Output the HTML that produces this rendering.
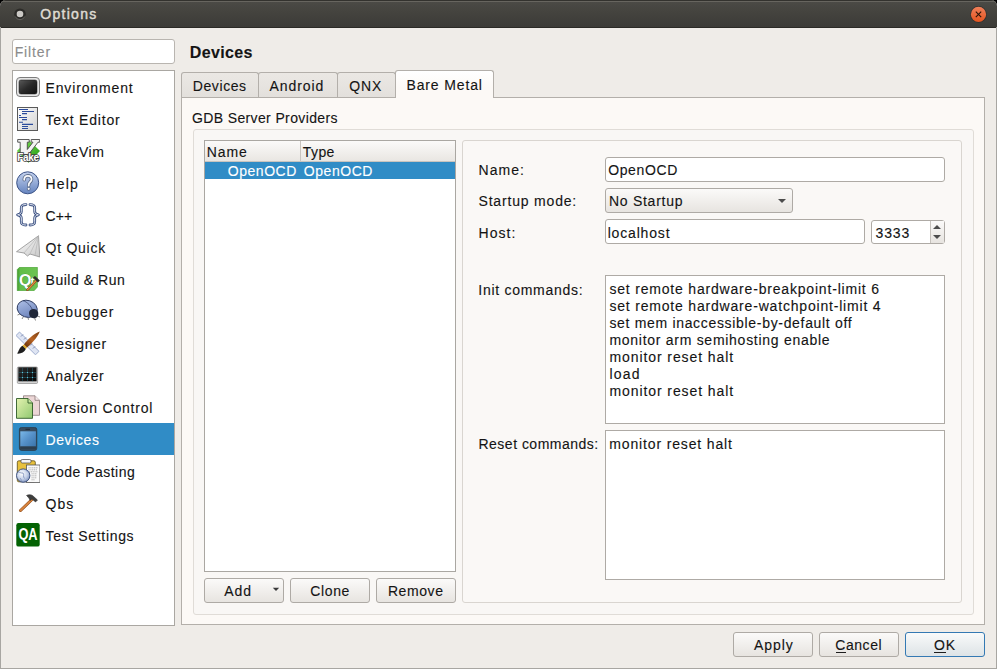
<!DOCTYPE html><html><head><meta charset="utf-8"><style>
*{box-sizing:border-box}
html,body{margin:0;padding:0;width:997px;height:669px;overflow:hidden;background:#000}
.t{position:absolute;white-space:pre;font-family:"Liberation Sans",sans-serif;-webkit-text-stroke:0.12px currentColor}
.a{position:absolute}
</style></head><body>
<div class="a" style="left:0;top:0;width:997px;height:669px;background:#efece8;border-radius:6px 6px 0 0;overflow:hidden"><div class="a" style="left:0;top:0;width:997px;height:28px;background:linear-gradient(#4c4b47,#45443f 40%,#3c3b37);border-bottom:1px solid #2b2a26"></div><div class="a" style="left:0;top:0;width:997px;height:1px;background:#33322e"></div><div class="a" style="left:0;top:1px;width:997px;height:1px;background:#67655f"></div><svg class="a" style="left:12px;top:6px" width="16" height="16"><circle cx="8" cy="8.2" r="5.8" fill="#2c2b28"/><path d="M3.2 10.5A5.2 5.2 0 0 0 12.8 10.5" stroke="#6b6a65" stroke-width="0.9" fill="none"/><circle cx="8" cy="8" r="3.3" fill="#cbc9c5"/></svg><div class="t" style="left:40.2px;top:6px;font-size:14px;line-height:16px;font-weight:normal;color:#dfdbd2;letter-spacing:1.3px;-webkit-text-stroke:0.45px #dfdbd2">Options</div>
<svg class="a" style="left:968px;top:4px" width="22" height="22"><defs><linearGradient id="cb" x1="0" y1="0" x2="0" y2="1"><stop offset="0" stop-color="#f0805a"/><stop offset="1" stop-color="#e5541f"/></linearGradient></defs><circle cx="10.5" cy="10.4" r="8.3" fill="#2b2a27" opacity="0.7"/><circle cx="10.5" cy="10.4" r="7.6" fill="url(#cb)"/><path d="M7.8 7.7L13.2 13.1M13.2 7.7L7.8 13.1" stroke="#2a1408" stroke-width="1.1"/></svg><div class="a" style="left:0;top:27px;width:1px;height:642px;background:#a8a6a2"></div><div class="a" style="left:996px;top:27px;width:1px;height:642px;background:#a8a6a2"></div><div class="a" style="left:0;top:668px;width:997px;height:1px;background:#a8a6a2"></div><div class="a" style="left:12px;top:39px;width:163px;height:25px;background:#fff;border:1px solid #b9b5b0;border-radius:3px"></div><div class="t" style="left:14.7px;top:44px;font-size:14px;line-height:16px;font-weight:normal;color:#8c8c8c;letter-spacing:0.86px;">Filter</div>
<div class="a" style="left:12px;top:70px;width:163px;height:556px;background:#fff;border:1px solid #aaa7a2"></div><div class="a" style="left:13px;top:423px;width:161px;height:32px;background:#308cc6"></div><div class="t" style="left:45.5px;top:80px;font-size:14px;line-height:16px;font-weight:normal;color:#141414;letter-spacing:0.86px;">Environment</div>
<svg class="a" style="left:16px;top:75px" width="24" height="24" viewBox="0 0 24 24"><defs><linearGradient id="g0" x1="0" y1="0" x2="1" y2="1"><stop offset="0" stop-color="#5a5a5a"/><stop offset="0.5" stop-color="#2a2a2a"/><stop offset="1" stop-color="#111"/></linearGradient></defs>
<rect x="0.5" y="2.5" width="23" height="19" rx="3.5" fill="#e6e6e6" stroke="#7c7c7c"/>
<rect x="3" y="5" width="18" height="14" rx="2" fill="url(#g0)" stroke="#1a1a1a" stroke-width="0.5"/></svg><div class="t" style="left:45.5px;top:112px;font-size:14px;line-height:16px;font-weight:normal;color:#141414;letter-spacing:0.8px;">Text Editor</div>
<svg class="a" style="left:16px;top:107px" width="24" height="24" viewBox="0 0 24 24"><defs><linearGradient id="g1" x1="0" y1="0" x2="1" y2="1"><stop offset="0" stop-color="#ffffff"/><stop offset="1" stop-color="#d2d2d2"/></linearGradient></defs>
<rect x="1.5" y="0.5" width="20" height="23" fill="url(#g1)" stroke="#5a5a5a"/>
<g stroke="#2c4c9c" stroke-width="1.1">
<path d="M3 2.5H12M6 4.5H18M6 6.6H11M3 8.5H5M3 10.5H11M6 12.6H11M3 15.2H7M6 17.4H17M6 19.5H12M6 21.5H12"/></g></svg><div class="t" style="left:45.5px;top:144px;font-size:14px;line-height:16px;font-weight:normal;color:#141414;letter-spacing:0.567px;">FakeVim</div>
<svg class="a" style="left:16px;top:139px" width="24" height="24" viewBox="0 0 24 24"><defs><linearGradient id="g2" x1="0" y1="0" x2="1" y2="1"><stop offset="0" stop-color="#86e85a"/><stop offset="1" stop-color="#1c9410"/></linearGradient></defs>
<path d="M12.5 0.8L24 12L12.5 23.8L0.8 12Z" fill="url(#g2)"/>
<path d="M1.7 0.5H13.2V3.2H11.3V10.5L17 3.2H15.2V0.5H23.7V3.2H22L12.5 15.5H4.2V3.2H1.7Z" fill="#f2f2f2" stroke="#4a4a4a" stroke-width="0.9" stroke-linejoin="miter"/>
<text x="12" y="21.6" text-anchor="middle" font-family="Liberation Sans" font-size="10" font-weight="bold" fill="#fff" stroke="#404040" stroke-width="1.7" paint-order="stroke" letter-spacing="-0.3">Fake</text></svg><div class="t" style="left:45.5px;top:176px;font-size:14px;line-height:16px;font-weight:normal;color:#141414;letter-spacing:1.167px;">Help</div>
<svg class="a" style="left:16px;top:171px" width="24" height="24" viewBox="0 0 24 24"><defs><linearGradient id="g3" x1="0" y1="0" x2="0" y2="1"><stop offset="0" stop-color="#c4d2ee"/><stop offset="1" stop-color="#6584bf"/></linearGradient></defs>
<circle cx="11.7" cy="11.8" r="11" fill="url(#g3)" stroke="#3d5487" stroke-width="1"/>
<path d="M8.2 8.8C8.2 6.2 10 4.8 11.9 4.8C14 4.8 15.6 6.2 15.6 8.3C15.6 10.8 12.7 11.2 12.7 13.8V14.6" fill="none" stroke="#5a6a88" stroke-width="3.4" stroke-linecap="round"/>
<path d="M8.2 8.8C8.2 6.2 10 4.8 11.9 4.8C14 4.8 15.6 6.2 15.6 8.3C15.6 10.8 12.7 11.2 12.7 13.8V14.6" fill="none" stroke="#fafbfd" stroke-width="1.8" stroke-linecap="round"/>
<circle cx="12.7" cy="17.8" r="1.9" fill="#5a6a88"/><circle cx="12.7" cy="17.8" r="1.1" fill="#fff"/></svg><div class="t" style="left:45.5px;top:208px;font-size:14px;line-height:16px;font-weight:normal;color:#141414;letter-spacing:0.15px;">C++</div>
<svg class="a" style="left:16px;top:203px" width="24" height="24" viewBox="0 0 24 24"><g fill="none" stroke-linecap="round" stroke-linejoin="round">
<path id="lb" d="M10 1.6C6.5 1.6 5.3 2.3 5.3 5V8.6C5.3 10.4 4 11.4 1.6 11.8C4 12.2 5.3 13.2 5.3 15V18.6C5.3 21.3 6.5 22 10 22" stroke="#3a4f80" stroke-width="2.8"/>
<path d="M10 1.6C6.5 1.6 5.3 2.3 5.3 5V8.6C5.3 10.4 4 11.4 1.6 11.8C4 12.2 5.3 13.2 5.3 15V18.6C5.3 21.3 6.5 22 10 22" stroke="#e4e9f4" stroke-width="1"/>
<path d="M14 1.6C17.5 1.6 18.7 2.3 18.7 5V8.6C18.7 10.4 20 11.4 22.4 11.8C20 12.2 18.7 13.2 18.7 15V18.6C18.7 21.3 17.5 22 14 22" stroke="#3a4f80" stroke-width="2.8"/>
<path d="M14 1.6C17.5 1.6 18.7 2.3 18.7 5V8.6C18.7 10.4 20 11.4 22.4 11.8C20 12.2 18.7 13.2 18.7 15V18.6C18.7 21.3 17.5 22 14 22" stroke="#e4e9f4" stroke-width="1"/></g></svg><div class="t" style="left:45.5px;top:240px;font-size:14px;line-height:16px;font-weight:normal;color:#141414;letter-spacing:0.75px;">Qt Quick</div>
<svg class="a" style="left:16px;top:235px" width="24" height="24" viewBox="0 0 24 24"><defs><linearGradient id="g5" x1="0" y1="0" x2="1" y2="1"><stop offset="0" stop-color="#ffffff"/><stop offset="1" stop-color="#c8c8c8"/></linearGradient></defs>
<path d="M22.5 0.8L0.5 16.7L8 18L11.5 21L14 19L23.8 22Z" fill="url(#g5)" stroke="#8e8e8e" stroke-width="0.8" stroke-linejoin="round"/>
<path d="M22.5 0.8L8 18M22.5 0.8L14 19M22.5 0.8L19 20.5" stroke="#b0b0b0" stroke-width="0.6" fill="none"/></svg><div class="t" style="left:45.5px;top:272px;font-size:14px;line-height:16px;font-weight:normal;color:#141414;letter-spacing:0.54px;">Build &amp; Run</div>
<svg class="a" style="left:16px;top:267px" width="24" height="24" viewBox="0 0 24 24"><defs><linearGradient id="g6" x1="0" y1="0" x2="1" y2="0"><stop offset="0" stop-color="#3f9a2c"/><stop offset="0.15" stop-color="#62bd48"/><stop offset="1" stop-color="#6cc452"/></linearGradient></defs>
<path d="M3.5 0.3H21.4V20L18 23.8H1.3V2.5Z" fill="url(#g6)" stroke="#3f9a2c" stroke-width="0.6"/>
<text x="3" y="18.5" font-family="Liberation Sans" font-weight="bold" font-size="16" fill="#fff" stroke="#2e7a22" stroke-width="0.6" paint-order="stroke">Q</text>
<text x="14.5" y="17.5" font-family="Liberation Sans" font-weight="bold" font-size="11" fill="#fff" stroke="#2e7a22" stroke-width="0.5" paint-order="stroke">t</text>
<path d="M11.5 22.8L20 13.8" stroke="#7a3e12" stroke-width="2.4" stroke-linecap="round"/>
<path d="M11.5 22.8L20 13.8" stroke="#e08a40" stroke-width="1.3" stroke-linecap="round"/>
<path d="M17 10.5L19 9L23.8 13.5L22 15.5Z" fill="#2e2e2e"/></svg><div class="t" style="left:45.5px;top:304px;font-size:14px;line-height:16px;font-weight:normal;color:#141414;letter-spacing:0.929px;">Debugger</div>
<svg class="a" style="left:16px;top:299px" width="24" height="24" viewBox="0 0 24 24"><defs><linearGradient id="g7" x1="0" y1="0" x2="1" y2="1"><stop offset="0" stop-color="#b4c5ea"/><stop offset="1" stop-color="#6078b4"/></linearGradient></defs>
<path d="M4 15L1.5 16M7.5 17.5L6 20M12 18.5L12.5 20.8M20.5 16.5L24 18M18.5 18.5L19.5 21.5" stroke="#666" stroke-width="0.8" fill="none"/>
<ellipse cx="11.2" cy="9.8" rx="10.2" ry="8.4" transform="rotate(18 11.2 9.8)" fill="url(#g7)" stroke="#2c3a60" stroke-width="0.9"/>
<path d="M7 1.6C11.5 3 15 7 17 12" stroke="#2c3a60" stroke-width="0.7" fill="none"/>
<path d="M13 14C13 11 15.5 9.8 18 10C21 10.3 22.5 12.5 22.3 15.3C22 18 20 19.5 17.5 19.3C14.8 19 13 17 13 14Z" fill="#1f2738"/></svg><div class="t" style="left:45.5px;top:336px;font-size:14px;line-height:16px;font-weight:normal;color:#141414;letter-spacing:0.671px;">Designer</div>
<svg class="a" style="left:16px;top:331px" width="24" height="24" viewBox="0 0 24 24"><defs><linearGradient id="g8" x1="0" y1="1" x2="1" y2="0"><stop offset="0" stop-color="#5a2a08"/><stop offset="0.5" stop-color="#b86424"/><stop offset="1" stop-color="#7a3e10"/></linearGradient></defs>
<path d="M3.5 1L0 4.5L19.5 23.8L23 20.3Z" fill="#dfe5f3" stroke="#8c9cc4" stroke-width="0.8"/>
<path d="M5 5.5L7 3.5M8 8.5L10 6.5M11 11.5L13 9.5M14 14.5L16 12.5M17 17.5L19 15.5" stroke="#7080a8" stroke-width="0.9"/>
<path d="M23.8 0.5C17.5 2.5 11.5 8.5 8 13.5L11 16.5C15.5 12.5 21.5 6.5 23.8 0.5Z" fill="url(#g8)"/>
<path d="M8 13.5L11 16.5L9.8 18L6.5 14.8Z" fill="#e0a820"/>
<path d="M6.5 14.8L9.8 18C8.5 21.5 4.5 23 1 22.6C2.8 21 3 16.5 6.5 14.8Z" fill="#1e1e1e"/></svg><div class="t" style="left:45.5px;top:368px;font-size:14px;line-height:16px;font-weight:normal;color:#141414;letter-spacing:0.529px;">Analyzer</div>
<svg class="a" style="left:16px;top:363px" width="24" height="24" viewBox="0 0 24 24"><defs><linearGradient id="g9" x1="0" y1="0" x2="1" y2="1"><stop offset="0" stop-color="#2a2a2a"/><stop offset="1" stop-color="#050505"/></linearGradient></defs>
<rect x="1.3" y="4" width="20.3" height="16.5" rx="1.2" fill="#d4d4d4" stroke="#7a7a7a" stroke-width="0.6"/>
<rect x="2.3" y="4.3" width="18.3" height="14" fill="url(#g9)"/>
<g stroke="#2a7f95" stroke-width="0.55" opacity="0.7"><path d="M6.5 4.5V18.3M11.5 4.5V18.3M16.5 4.5V18.3M2.5 9.5H20.5M2.5 14.5H20.5"/></g>
<g fill="#6fd4ea"><circle cx="6.5" cy="9.5" r="0.6"/><circle cx="11.5" cy="9.5" r="0.6"/><circle cx="16.5" cy="9.5" r="0.6"/><circle cx="6.5" cy="14.5" r="0.6"/><circle cx="11.5" cy="14.5" r="0.6"/><circle cx="16.5" cy="14.5" r="0.6"/></g></svg><div class="t" style="left:45.5px;top:400px;font-size:14px;line-height:16px;font-weight:normal;color:#141414;letter-spacing:0.8px;">Version Control</div>
<svg class="a" style="left:16px;top:395px" width="24" height="24" viewBox="0 0 24 24"><defs><linearGradient id="g10" x1="0" y1="0" x2="1" y2="1"><stop offset="0" stop-color="#e4f2b0"/><stop offset="1" stop-color="#90c870"/></linearGradient></defs>
<path d="M7.5 0.8H19L23.5 5.3V20.3H7.5Z" fill="#ecd6d6" stroke="#8a7a7a" stroke-width="0.8"/>
<path d="M19 0.8V5.3H23.5" fill="#f6eaea" stroke="#8a7a7a" stroke-width="0.8"/>
<path d="M0.5 3.5H12L16.5 8V23.3H0.5Z" fill="url(#g10)" stroke="#2e5a26" stroke-width="0.9"/>
<path d="M12 3.5V8H16.5" fill="#c8e8a0" stroke="#2e5a26" stroke-width="0.9"/></svg><div class="t" style="left:45.5px;top:432px;font-size:14px;line-height:16px;font-weight:normal;color:#ffffff;letter-spacing:0.6px;">Devices</div>
<svg class="a" style="left:16px;top:427px" width="24" height="24" viewBox="0 0 24 24"><defs><linearGradient id="g11" x1="0" y1="0" x2="1" y2="1"><stop offset="0" stop-color="#7ab8e8"/><stop offset="0.5" stop-color="#5590c8"/><stop offset="1" stop-color="#3a74aa"/></linearGradient></defs>
<rect x="3.4" y="0.4" width="17.4" height="23" rx="2.2" fill="#364b5e" stroke="#26343f" stroke-width="0.7"/>
<rect x="4.3" y="4.3" width="15.6" height="15.2" fill="url(#g11)"/>
<path d="M9.5 2.3H14" stroke="#1e2a34" stroke-width="1"/>
<rect x="4.3" y="19.5" width="15.6" height="2.6" fill="#2c3e4e"/></svg><div class="t" style="left:45.5px;top:464px;font-size:14px;line-height:16px;font-weight:normal;color:#141414;letter-spacing:0.47px;">Code Pasting</div>
<svg class="a" style="left:16px;top:459px" width="24" height="24" viewBox="0 0 24 24"><defs><radialGradient id="g12" cx="0.4" cy="0.35" r="0.75"><stop offset="0" stop-color="#ffffff"/><stop offset="0.55" stop-color="#c4d0e8"/><stop offset="1" stop-color="#6a80b0"/></radialGradient></defs>
<rect x="1.3" y="1.8" width="18" height="21" rx="1.5" fill="#e8c13c" stroke="#5a4a18" stroke-width="0.8"/>
<rect x="5" y="0.5" width="10" height="3.5" rx="1.2" fill="#f4f4f4" stroke="#444" stroke-width="0.7"/>
<rect x="10.5" y="6" width="13.5" height="17.5" fill="#fafafa" stroke="#555" stroke-width="0.8"/>
<g stroke="#666" stroke-width="0.5" stroke-dasharray="1.2 0.6"><path d="M12.5 8.8H22M12.5 10.8H21.5M13 12.8H22M15.5 14.8H21M15.5 16.8H21M15.5 18.8H20.5M15.5 20.8H19"/></g>
<circle cx="7.2" cy="16.6" r="6.7" fill="url(#g12)" stroke="#34497a" stroke-width="0.9"/>
<path d="M2.5 13.5C4 13 5.5 14.5 7 14C8.5 15.5 6.5 17.5 8.5 19.5M9.5 11C10.5 12 12 12.3 13 12.5M4 19C5 20 5.5 21 5 22" stroke="#7a8cb8" stroke-width="0.8" fill="none"/></svg><div class="t" style="left:45.5px;top:496px;font-size:14px;line-height:16px;font-weight:normal;color:#141414;letter-spacing:1.0px;">Qbs</div>
<svg class="a" style="left:16px;top:491px" width="24" height="24" viewBox="0 0 24 24"><path d="M4.5 19.5L17 7.5" stroke="#8a4a1a" stroke-width="3" stroke-linecap="round"/>
<path d="M4.5 19.5L17 7.5" stroke="#d9843e" stroke-width="1.8" stroke-linecap="round"/>
<path d="M10.5 4.5C12.5 3.2 15 3.5 16.5 4.5L21.5 9L19.5 11L16 8L14 9.5C13.5 7.5 12 6 10.5 4.5Z" fill="#3e3e3e" stroke="#222" stroke-width="0.5"/></svg><div class="t" style="left:45.5px;top:528px;font-size:14px;line-height:16px;font-weight:normal;color:#141414;letter-spacing:0.66px;">Test Settings</div>
<svg class="a" style="left:16px;top:523px" width="24" height="24" viewBox="0 0 24 24"><rect x="0.3" y="0" width="23.4" height="23.6" rx="2.2" fill="#036203"/>
<text x="15" y="16.6" transform="scale(0.8,1)" text-anchor="middle" font-family="Liberation Sans" font-weight="bold" font-size="16" fill="#fff" letter-spacing="-0.2">QA</text></svg><div class="t" style="left:189.8px;top:43px;font-size:16px;line-height:20px;font-weight:bold;color:#141414;letter-spacing:0.333px;">Devices</div>
<div class="a" style="left:181px;top:97px;width:804px;height:528px;background:#fcf9f6;border:1px solid #b3afaa"></div><div class="a" style="left:181px;top:72px;width:78px;height:25px;background:linear-gradient(#ebe8e4,#e3e0dc);border:1px solid #b3afaa;border-bottom:none;border-radius:3px 3px 0 0"></div><div class="t" style="left:192.8px;top:78px;font-size:14px;line-height:16px;font-weight:normal;color:#141414;letter-spacing:0.583px;">Devices</div>
<div class="a" style="left:258px;top:72px;width:80px;height:25px;background:linear-gradient(#ebe8e4,#e3e0dc);border:1px solid #b3afaa;border-bottom:none;border-radius:3px 3px 0 0"></div><div class="t" style="left:269.6px;top:78px;font-size:14px;line-height:16px;font-weight:normal;color:#141414;letter-spacing:0.9px;">Android</div>
<div class="a" style="left:337px;top:72px;width:59px;height:25px;background:linear-gradient(#ebe8e4,#e3e0dc);border:1px solid #b3afaa;border-bottom:none;border-radius:3px 3px 0 0"></div><div class="t" style="left:349.3px;top:78px;font-size:14px;line-height:16px;font-weight:normal;color:#141414;letter-spacing:0.9px;">QNX</div>
<div class="a" style="left:395px;top:70px;width:99px;height:28px;background:linear-gradient(#ffffff,#fcf9f6 60%);border:1px solid #b3afaa;border-bottom:none;border-radius:3px 3px 0 0"></div><div class="t" style="left:406.5px;top:77px;font-size:14px;line-height:16px;font-weight:normal;color:#141414;letter-spacing:0.856px;">Bare Metal</div>
<div class="t" style="left:192px;top:110px;font-size:14px;line-height:16px;font-weight:normal;color:#141414;letter-spacing:0.368px;">GDB Server Providers</div>
<div class="a" style="left:193px;top:129px;width:781px;height:486px;background:#f9f7f5;border:1px solid #e0dcd7;border-radius:3px"></div><div class="a" style="left:204px;top:140px;width:252px;height:432px;background:#fff;border:1px solid #aaa7a2"></div><div class="a" style="left:205px;top:141px;width:250px;height:21px;background:linear-gradient(#fbfaf9,#e9e6e2);border-bottom:1px solid #c8c4bf"></div><div class="a" style="left:300px;top:141px;width:1px;height:20px;background:#c8c4bf"></div><div class="t" style="left:206.8px;top:144px;font-size:14px;line-height:16px;font-weight:normal;color:#141414;letter-spacing:0.867px;">Name</div>
<div class="t" style="left:302.8px;top:144px;font-size:14px;line-height:16px;font-weight:normal;color:#141414;letter-spacing:0.4px;">Type</div>
<div class="a" style="left:205px;top:162px;width:250px;height:17px;background:#308cc6"></div><div class="t" style="left:227.7px;top:163px;font-size:14px;line-height:16px;font-weight:normal;color:#fff;letter-spacing:0.55px;">OpenOCD</div>
<div class="t" style="left:303.8px;top:163px;font-size:14px;line-height:16px;font-weight:normal;color:#fff;letter-spacing:0.55px;">OpenOCD</div>
<div class="a" style="left:204px;top:578px;width:80px;height:25px;background:linear-gradient(#fbfaf9,#e7e4e0);border:1px solid #aeaaa5;border-radius:3px"></div><div class="t" style="left:224.3px;top:583px;font-size:14px;line-height:16px;font-weight:normal;color:#141414;letter-spacing:0.95px;">Add</div>
<svg class="a" style="left:272px;top:585px" width="10" height="10"><path d="M0.8 2.8H7.2L4 6Z" fill="#3a3a3a"/></svg><div class="a" style="left:290px;top:578px;width:80px;height:25px;background:linear-gradient(#fbfaf9,#e7e4e0);border:1px solid #aeaaa5;border-radius:3px"></div><div class="t" style="left:310.3px;top:583px;font-size:14px;line-height:16px;font-weight:normal;color:#141414;letter-spacing:0.62px;">Clone</div>
<div class="a" style="left:376px;top:578px;width:80px;height:25px;background:linear-gradient(#fbfaf9,#e7e4e0);border:1px solid #aeaaa5;border-radius:3px"></div><div class="t" style="left:387.9px;top:583px;font-size:14px;line-height:16px;font-weight:normal;color:#141414;letter-spacing:0.58px;">Remove</div>
<div class="a" style="left:462px;top:140px;width:500px;height:463px;background:#faf8f6;border:1px solid #d9d5d0;border-radius:3px"></div><div class="t" style="left:478.5px;top:162px;font-size:14px;line-height:16px;font-weight:normal;color:#141414;letter-spacing:1.05px;">Name:</div>
<div class="t" style="left:478.5px;top:193px;font-size:14px;line-height:16px;font-weight:normal;color:#141414;letter-spacing:0.817px;">Startup mode:</div>
<div class="t" style="left:478.5px;top:225px;font-size:14px;line-height:16px;font-weight:normal;color:#141414;letter-spacing:1.025px;">Host:</div>
<div class="a" style="left:605px;top:157px;width:340px;height:25px;background:#fff;border:1px solid #aeaaa5;border-radius:3px"></div><div class="t" style="left:608.2px;top:162px;font-size:14px;line-height:16px;font-weight:normal;color:#141414;letter-spacing:0.617px;">OpenOCD</div>
<div class="a" style="left:605px;top:188px;width:188px;height:25px;background:linear-gradient(#fbfaf9,#e7e4e0);border:1px solid #aeaaa5;border-radius:3px"></div><div class="t" style="left:608.9px;top:193px;font-size:14px;line-height:16px;font-weight:normal;color:#141414;letter-spacing:0.744px;">No Startup</div>
<svg class="a" style="left:777px;top:196px" width="10" height="10"><path d="M1 3H9L5 7Z" fill="#4c4c4c"/></svg><div class="a" style="left:605px;top:219px;width:260px;height:25px;background:#fff;border:1px solid #aeaaa5;border-radius:3px"></div><div class="t" style="left:607.7px;top:225px;font-size:14px;line-height:16px;font-weight:normal;color:#141414;letter-spacing:0.825px;">localhost</div>
<div class="a" style="left:871px;top:220px;width:74px;height:24px;background:#fff;border:1px solid #aeaaa5;border-radius:3px"></div><div class="a" style="left:930px;top:221px;width:14px;height:22px;background:linear-gradient(#fbfaf9,#e7e4e0);border-left:1px solid #c5c1bc"></div><svg class="a" style="left:931px;top:221px" width="13" height="22"><path d="M2 8H10L6 4Z M2 14H10L6 18Z" fill="#4c4c4c"/></svg><div class="t" style="left:875.5px;top:225px;font-size:14px;line-height:16px;font-weight:normal;color:#141414;letter-spacing:0.867px;">3333</div>
<div class="t" style="left:478.3px;top:282px;font-size:14px;line-height:16px;font-weight:normal;color:#141414;letter-spacing:0.715px;">Init commands:</div>
<div class="a" style="left:605px;top:275px;width:340px;height:149px;background:#fff;border:1px solid #aeaaa5"></div><div class="t" style="left:609.4px;top:281px;font-size:14px;line-height:16px;font-weight:normal;color:#141414;letter-spacing:0.811px;">set remote hardware-breakpoint-limit 6</div>
<div class="t" style="left:609.4px;top:298px;font-size:14px;line-height:16px;font-weight:normal;color:#141414;letter-spacing:0.811px;">set remote hardware-watchpoint-limit 4</div>
<div class="t" style="left:609.4px;top:315px;font-size:14px;line-height:16px;font-weight:normal;color:#141414;letter-spacing:0.68px;">set mem inaccessible-by-default off</div>
<div class="t" style="left:609.4px;top:332px;font-size:14px;line-height:16px;font-weight:normal;color:#141414;letter-spacing:0.724px;">monitor arm semihosting enable</div>
<div class="t" style="left:609.4px;top:349px;font-size:14px;line-height:16px;font-weight:normal;color:#141414;letter-spacing:0.918px;">monitor reset halt</div>
<div class="t" style="left:609.4px;top:366px;font-size:14px;line-height:16px;font-weight:normal;color:#141414;letter-spacing:1.233px;">load</div>
<div class="t" style="left:609.4px;top:383px;font-size:14px;line-height:16px;font-weight:normal;color:#141414;letter-spacing:0.918px;">monitor reset halt</div>
<div class="t" style="left:478.5px;top:436px;font-size:14px;line-height:16px;font-weight:normal;color:#141414;letter-spacing:0.486px;">Reset commands:</div>
<div class="a" style="left:605px;top:430px;width:340px;height:150px;background:#fff;border:1px solid #aeaaa5"></div><div class="t" style="left:609.3px;top:436px;font-size:14px;line-height:16px;font-weight:normal;color:#141414;letter-spacing:0.85px;">monitor reset halt</div>
<div class="a" style="left:733px;top:632px;width:80px;height:25px;background:linear-gradient(#fbfaf9,#e7e4e0);border:1px solid #aeaaa5;border-radius:3px"></div><div class="t" style="left:753.9px;top:637px;font-size:14px;line-height:16px;font-weight:normal;color:#141414;letter-spacing:0.95px;">Apply</div>
<div class="a" style="left:819px;top:632px;width:80px;height:25px;background:linear-gradient(#fbfaf9,#e7e4e0);border:1px solid #aeaaa5;border-radius:3px"></div><div class="t" style="left:835.3px;top:637px;font-size:14px;line-height:16px;font-weight:normal;color:#141414;letter-spacing:0.54px;">Cancel</div>
<div class="a" style="left:836px;top:652px;width:10px;height:1px;background:#1e1e1e"></div><div class="a" style="left:905px;top:632px;width:80px;height:25px;background:linear-gradient(#f9fafa,#dde3e6);border:1px solid #3479b3;border-radius:3px"></div><div class="t" style="left:933.9px;top:637px;font-size:14px;line-height:16px;font-weight:normal;color:#141414;letter-spacing:0.9px;">OK</div>
<div class="a" style="left:934px;top:652px;width:12px;height:1px;background:#1e1e1e"></div></div></body></html>
